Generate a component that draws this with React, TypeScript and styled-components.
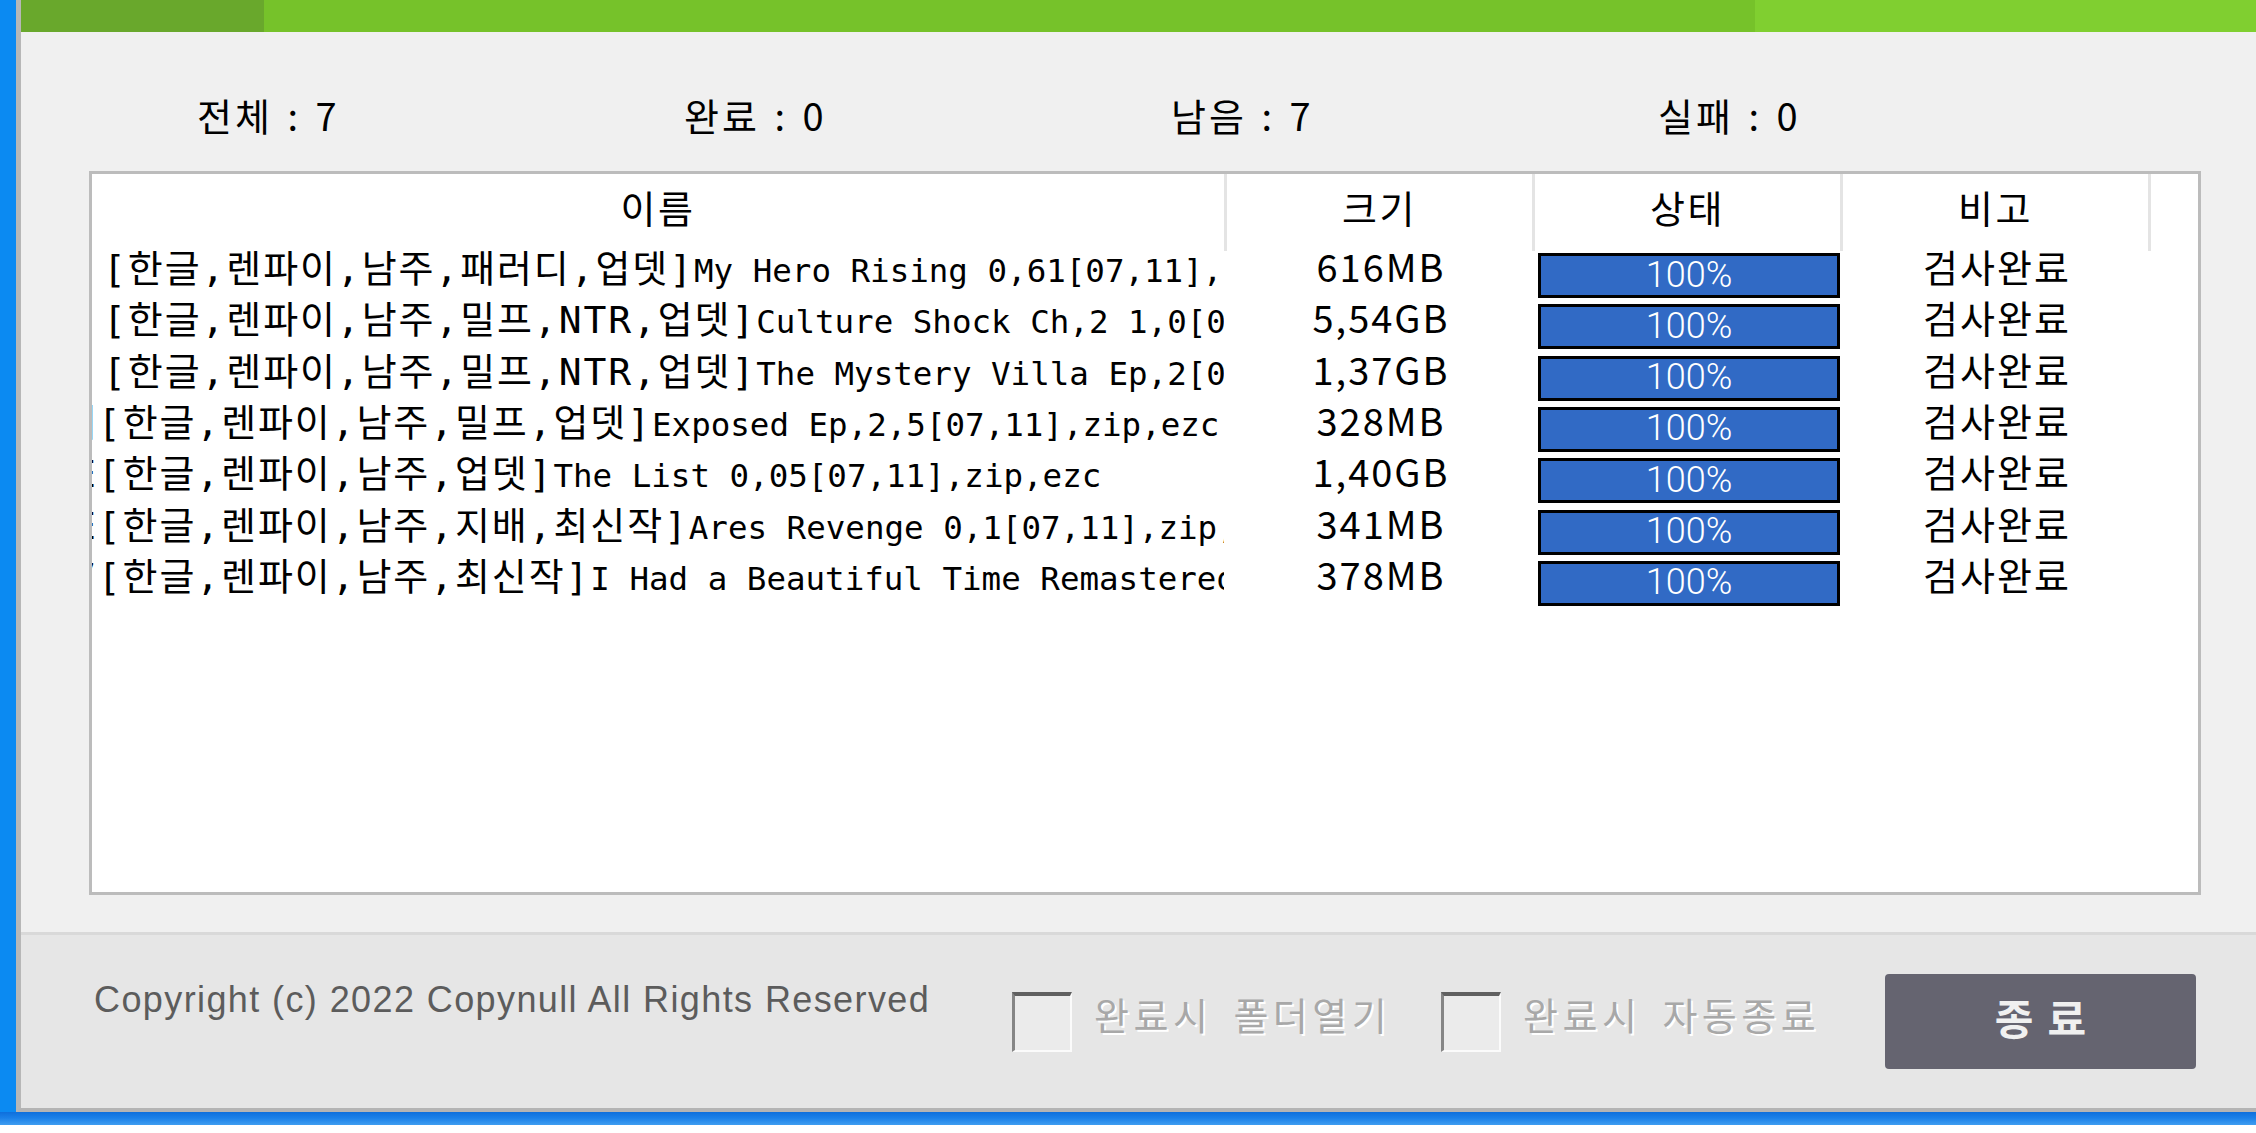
import React from "react";
import styled, { createGlobalStyle } from "styled-components";

const GlobalStyle = createGlobalStyle`
  html, body {
    margin: 0;
    padding: 0;
    background: #ffffff;
  }
  body {
    width: 2256px;
    height: 1133px;
    overflow: hidden;
    font-family: "Noto Sans CJK KR", "Noto Sans", sans-serif;
    color: #000000;
  }
`;

const Desktop = styled.div`
  width: 2256px;
  height: 1133px;
  display: flex;
  flex-direction: column;
  background: #ffffff;
`;

const DesktopRow = styled.div`
  display: flex;
  height: 1112px;
`;

const DesktopEdge = styled.div`
  width: 16px;
  flex: none;
  background: #0b8af2;
`;

const Taskbar = styled.div`
  height: 13px;
  background: linear-gradient(180deg, #0e6fdc 0%, #1a80e8 45%, #3f9df0 100%);
`;

const Window = styled.div`
  flex: 1;
  display: flex;
  flex-direction: column;
  border-left: 5px solid #b7b7b7;
  border-bottom: 4px solid #b4b4b4;
  background: #f0f0f0;
  min-width: 0;
`;

const OverallBar = styled.div`
  height: 32px;
  flex: none;
  display: flex;
`;

const OverallSegment = styled.div<{ $tone: string; $width?: number }>`
  background: ${(p) => p.$tone};
  ${(p) => (p.$width ? `width: ${p.$width}px; flex: none;` : "flex: 1;")}
`;

const Main = styled.div`
  flex: 1;
  display: flex;
  flex-direction: column;
  padding: 63px 55px 37px 68px;
  background: #f0f0f0;
`;

const StatsRow = styled.div`
  display: grid;
  grid-template-columns: repeat(4, 487px);
  padding-left: 108px;
  height: 40px;
`;

const Stat = styled.div`
  font-size: 38px;
  line-height: 40px;
  letter-spacing: 3px;
  word-spacing: 3px;
  white-space: nowrap;
`;

const ListBox = styled.div`
  margin-top: 36px;
  height: 724px;
  box-sizing: border-box;
  border: 3px solid #bcbcbc;
  background: #ffffff;
  overflow: hidden;
`;

const columns = "1135px 308px 308px 308px 1fr";

const HeaderRow = styled.div`
  display: grid;
  grid-template-columns: ${columns};
  height: 77px;
`;

const HeaderCell = styled.div<{ $last?: boolean }>`
  box-sizing: border-box;
  border-right: ${(p) => (p.$last ? "none" : "3px solid #e4e4e4")};
  padding-top: 13px;
  text-align: center;
  font-size: 38px;
  line-height: 40px;
  letter-spacing: 2.5px;
`;

const ItemRow = styled.div`
  display: grid;
  grid-template-columns: ${columns};
  height: 51.33px;
`;

const NameCell = styled.div`
  overflow: hidden;
  padding-right: 3px;
`;

const NameText = styled.div<{ $lead: number }>`
  height: 100%;
  margin-left: ${(p) => p.$lead}px;
  overflow: hidden;
  white-space: nowrap;
  font-size: 38px;
  line-height: 29px;
`;

const Tags = styled.span`
  font-family: "DejaVu Sans Mono", "Noto Sans CJK KR", monospace;
  font-size: 38px;
  letter-spacing: 1.9px;
`;

const Title = styled.span`
  font-family: "DejaVu Sans Mono", "Liberation Mono", monospace;
  font-size: 32.5px;
  letter-spacing: 0;
`;

const TextCell = styled.div`
  text-align: center;
  white-space: nowrap;
  font-size: 38px;
  line-height: 29px;
  letter-spacing: 2px;
`;

const StatusCell = styled.div`
  padding: 2px 3px 0 3px;
`;

const ProgressBar = styled.div`
  height: 45px;
  box-sizing: border-box;
  border: 3px solid #000000;
  background: #316ac5;
  color: #ffffff;
  display: flex;
  align-items: center;
  justify-content: center;
  padding-bottom: 2px;
  font-family: Roboto, "Liberation Sans", sans-serif;
  font-weight: 300;
  font-size: 36px;
  line-height: 1;
`;

const Footer = styled.div`
  height: 173px;
  flex: none;
  box-sizing: content-box;
  border-top: 3px solid #d9d9d9;
  background: #e6e6e6;
  display: flex;
  align-items: center;
  padding: 0 60px 0 73px;
`;

const Copyright = styled.div`
  flex: 1;
  align-self: flex-start;
  margin-top: 45px;
  font-family: "Liberation Sans", Arial, sans-serif;
  font-size: 36px;
  line-height: 40px;
  letter-spacing: 1.4px;
  color: #5c5c5c;
  white-space: nowrap;
`;

const CheckOption = styled.label<{ $width: number }>`
  width: ${(p) => p.$width}px;
  flex: none;
  display: flex;
  align-items: center;
  gap: 22px;
`;

const CheckBox = styled.span`
  width: 60px;
  height: 60px;
  flex: none;
  box-sizing: border-box;
  border-top: 4px solid #606060;
  border-left: 3px solid #858585;
  border-right: 2px solid #fbfbfb;
  border-bottom: 2px solid #fbfbfb;
  background: #ebebeb;
`;

const CheckLabel = styled.span`
  font-size: 38px;
  line-height: 40px;
  letter-spacing: 4.5px;
  word-spacing: 8px;
  color: #a8a8a8;
  text-shadow: 2px 2px 0 #ffffff;
  white-space: nowrap;
  margin-bottom: 16px;
`;

const CloseButton = styled.button`
  width: 311px;
  height: 95px;
  flex: none;
  border: none;
  border-radius: 4px;
  background: #656470;
  color: #f0f0f0;
  font-family: "Noto Sans CJK KR", sans-serif;
  font-size: 42px;
  font-weight: 700;
  letter-spacing: 14px;
  padding: 0 0 10px 14px;
  cursor: pointer;
`;

const stats = ["전체 : 7", "완료 : 0", "남음 : 7", "실패 : 0"];

const items = [
  { lead: 11, tags: "[한글,렌파이,남주,패러디,업뎃]", title: "My Hero Rising 0,61[07,11],zip,ezc", size: "616MB" },
  { lead: 11, tags: "[한글,렌파이,남주,밀프,NTR,업뎃]", title: "Culture Shock Ch,2 1,0[07,11],zip,ezc", size: "5,54GB" },
  { lead: 11, tags: "[한글,렌파이,남주,밀프,NTR,업뎃]", title: "The Mystery Villa Ep,2[07,11],zip,ezc", size: "1,37GB" },
  { lead: -31, tags: "게[한글,렌파이,남주,밀프,업뎃]", title: "Exposed Ep,2,5[07,11],zip,ezc", size: "328MB" },
  { lead: -19, tags: "E[한글,렌파이,남주,업뎃]", title: "The List 0,05[07,11],zip,ezc", size: "1,40GB" },
  { lead: -19, tags: "E[한글,렌파이,남주,지배,최신작]", title: "Ares Revenge 0,1[07,11],zip,ezc", size: "341MB" },
  { lead: -19, tags: "7[한글,렌파이,남주,최신작]", title: "I Had a Beautiful Time Remastered[07,11],zip,ezc", size: "378MB" },
];

export default function App() {
  return (
    <>
      <GlobalStyle />
      <Desktop>
        <DesktopRow>
          <DesktopEdge />
          <Window>
            <OverallBar>
              <OverallSegment $tone="#69a82c" $width={243} />
              <OverallSegment $tone="#76c22a" $width={1491} />
              <OverallSegment $tone="#80cf30" />
            </OverallBar>
            <Main>
              <StatsRow>
                {stats.map((s) => (
                  <Stat key={s}>{s}</Stat>
                ))}
              </StatsRow>
              <ListBox>
                <HeaderRow>
                  <HeaderCell>이름</HeaderCell>
                  <HeaderCell>크기</HeaderCell>
                  <HeaderCell>상태</HeaderCell>
                  <HeaderCell>비고</HeaderCell>
                  <HeaderCell $last />
                </HeaderRow>
                {items.map((it, i) => (
                  <ItemRow key={i}>
                    <NameCell>
                      <NameText $lead={it.lead}>
                        <Tags>{it.tags}</Tags>
                        <Title>{it.title}</Title>
                      </NameText>
                    </NameCell>
                    <TextCell>{it.size}</TextCell>
                    <StatusCell>
                      <ProgressBar>100%</ProgressBar>
                    </StatusCell>
                    <TextCell>검사완료</TextCell>
                    <div />
                  </ItemRow>
                ))}
              </ListBox>
            </Main>
            <Footer>
              <Copyright>Copyright (c) 2022 Copynull All Rights Reserved</Copyright>
              <CheckOption $width={429}>
                <CheckBox />
                <CheckLabel>완료시 폴더열기</CheckLabel>
              </CheckOption>
              <CheckOption $width={444}>
                <CheckBox />
                <CheckLabel>완료시 자동종료</CheckLabel>
              </CheckOption>
              <CloseButton>종료</CloseButton>
            </Footer>
          </Window>
        </DesktopRow>
        <Taskbar />
      </Desktop>
    </>
  );
}
